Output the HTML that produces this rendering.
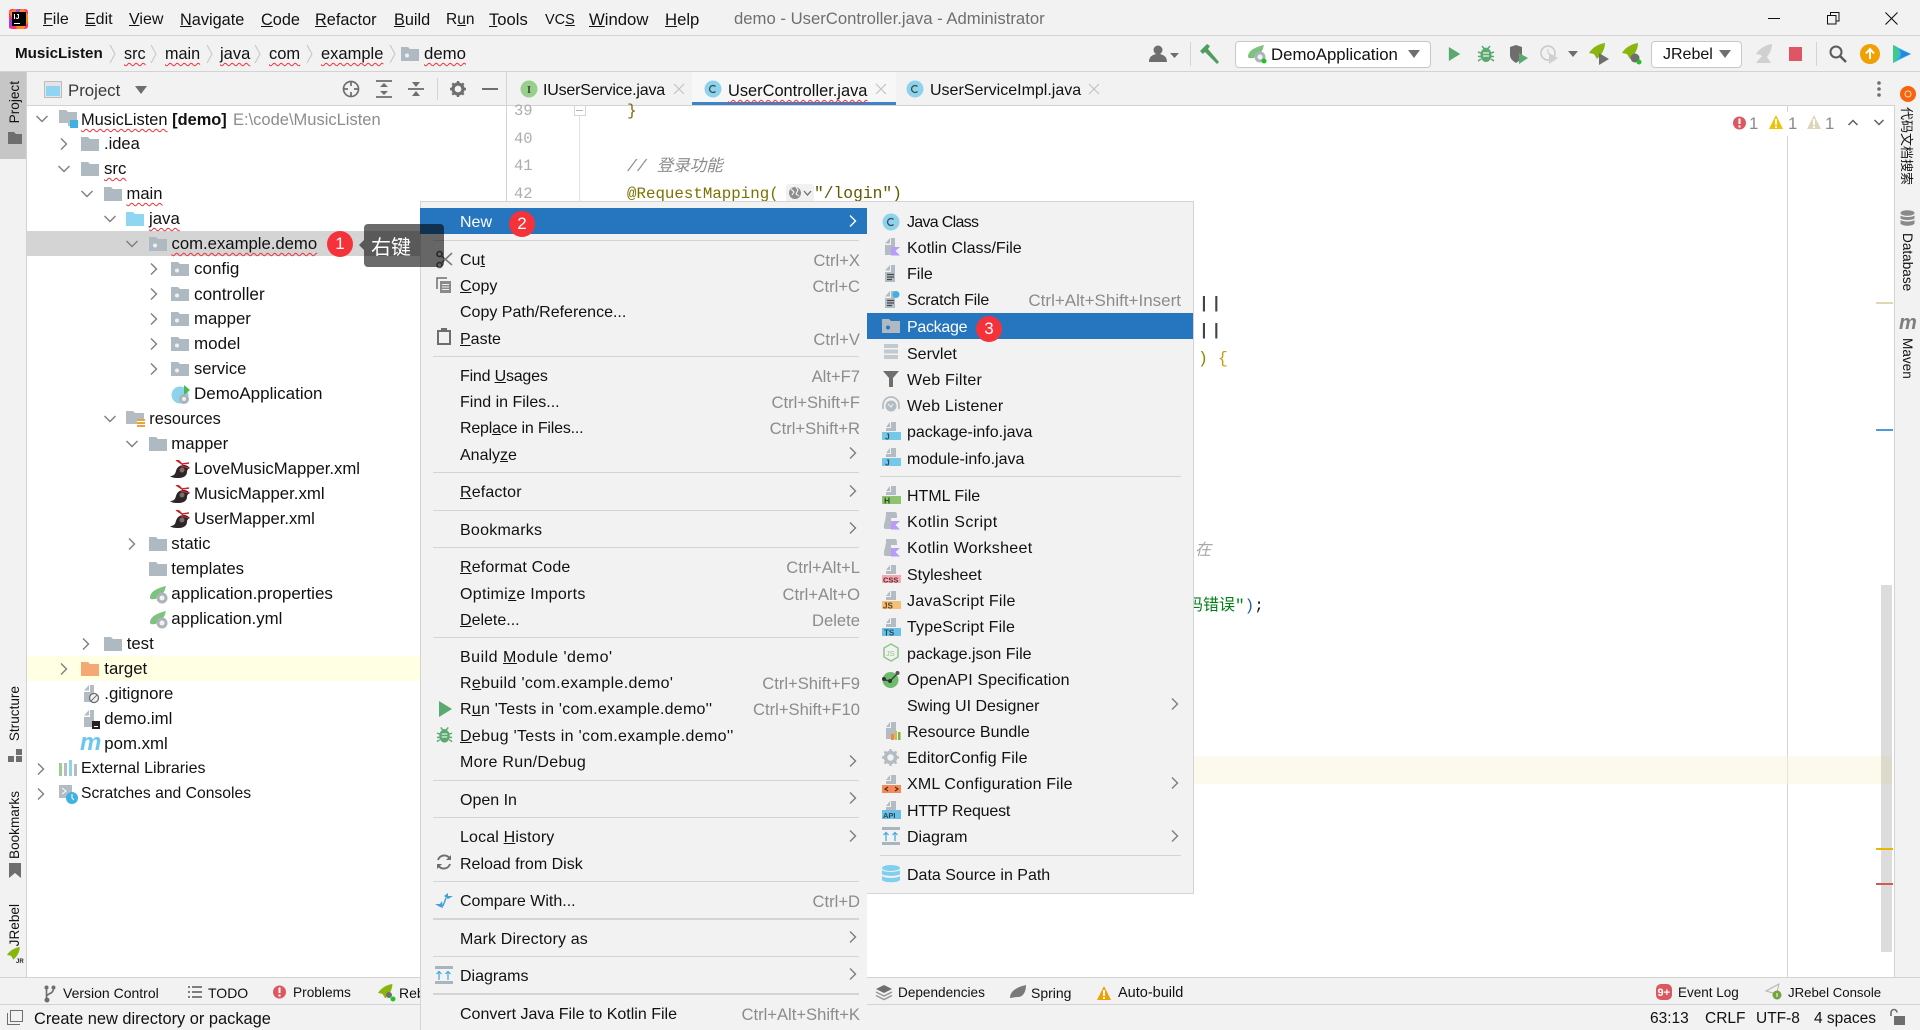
<!DOCTYPE html>
<html><head><meta charset="utf-8"><title>demo - UserController.java</title>
<style>
html,body{margin:0;padding:0}
body{width:1920px;height:1030px;overflow:hidden;position:relative;background:#f2f2f2;font-family:"Liberation Sans","Noto Sans CJK SC",sans-serif;color:#111}
.b{position:absolute}
svg{position:absolute;overflow:visible}
.t,.m,.s,.n,.x,.c,.tb{position:absolute;white-space:nowrap;line-height:20px;height:20px;font-style:normal}
.t{font-size:16.8px}
.m{font-size:16px;left:40px;margin-top:1px}
.s{font-size:16.6px;color:#8c8c8c;margin-top:1px}
.n{font-size:16.3px;top:10px}
.tb{font-size:14px;top:983px}
.sq{text-decoration:underline wavy #f0303a;text-decoration-thickness:1px;text-underline-offset:3px;text-decoration-skip-ink:none}
.c{font-family:"Liberation Mono","Noto Sans CJK SC",monospace;font-size:16px;margin-top:1px}
.v{position:absolute;writing-mode:vertical-rl;text-orientation:sideways;line-height:20px;width:20px;white-space:nowrap;font-size:13.6px}
.l{transform:rotate(180deg)}
.sp{position:absolute;height:1px;background:#d4d4d4}
.bd{position:absolute;width:26px;height:26px;border-radius:50%;background:#f5323a;color:#fff;text-align:center;line-height:26px;font-size:17px}
</style></head><body>
<svg width="0" height="0" style="position:absolute">
<defs>
<symbol id="fld" viewBox="0 0 18 16"><path d="M0 1h7l2 2h9v12H0z" fill="#afb9c1"/></symbol>
<symbol id="pkg" viewBox="0 0 18 16"><path d="M0 1h7l2 2h9v12H0z" fill="#afb9c1"/><circle cx="6" cy="9.500" r="2" fill="#eef1f2"/></symbol>
<symbol id="cr" viewBox="0 0 16 16"><path d="M5 2.500l5.500 5.500L5 13.500" fill="none" stroke="#7d7d7d" stroke-width="1.400"/></symbol>
<symbol id="cd" viewBox="0 0 16 16"><path d="M2.500 5L8 10.500 13.500 5" fill="none" stroke="#7d7d7d" stroke-width="1.400"/></symbol>
<symbol id="doc" viewBox="0 0 18 18"><path d="M8 0v5.500H3zM9 0h4v17H3V7h6z" fill="#b3bcc3"/></symbol>
<symbol id="cls" viewBox="0 0 18 18"><circle cx="9" cy="9" r="8.500" fill="#8ed3ec"/><path d="M11.500 6.500a3.500 3.500 0 1 0 0 5" fill="none" stroke="#3d4b52" stroke-width="1.300"/></symbol>
<symbol id="bird" viewBox="0 0 20 18"><path d="M0 16c3 0 5-1 6-5 1-4 4-6 8-6 3 0 5 2 6 3-2 1-3 2-3 4 0 4-4 6-8 6-4 0-7 0-9-2z" fill="#2e2626"/><path d="M6 0l6 4 7-1M8 0l5 5M11 6l8 2" fill="none" stroke="#c9242c" stroke-width="1.400"/><circle cx="12" cy="10" r="2.500" fill="#7b6b6b"/></symbol>
<symbol id="leaf" viewBox="0 0 20 20"><path d="M1 13C1 6 9 3 17 1c-1 3-1 5-3 7-3 0-6 2-7 6-3 0-5 1-6-1z" fill="#7fc17f"/><circle cx="13" cy="13" r="5.500" fill="#aab4bb"/><circle cx="13" cy="13" r="2.500" fill="#f2f2f2"/></symbol>
<symbol id="kt" viewBox="0 0 18 18"><path d="M8 0v5.500H3zM9 0h4v17H3V7h6z" fill="#b3bcc3"/><path d="M9 9h9l-4.500 4 4.500 4.500H9z" fill="#b99bf8"/></symbol>
<symbol id="ks" viewBox="0 0 18 18"><path d="M4 0h9c2 0 2 2 2 6H9v11H4c-3 0-2-3-2-3 0-4 2-5 2-14z" fill="#b3bcc3"/><path d="M9 9h9l-4.500 4 4.500 4.500H9z" fill="#b99bf8"/></symbol>
<symbol id="lines" viewBox="0 0 18 18"><path d="M5 9.500h7M5 12h7M5 14.500h5" stroke="#45494a" stroke-width="1.200"/></symbol>
<symbol id="dia" viewBox="0 0 18 18"><path d="M0 0h18v3H0zM0 15h18v3H0z" fill="#a9b4bb"/><path d="M4 14V6M1.500 8L4 5.500 6.500 8M13 14V6M10.500 8L13 5.500 15.500 8" fill="none" stroke="#3fa9dc" stroke-width="1.200"/></symbol>
<symbol id="run" viewBox="0 0 16 18"><path d="M1 1l13 8-13 8z" fill="#5aa96f"/></symbol>
<symbol id="bug" viewBox="0 0 18 18"><path d="M5 1l2 2.500h4L13 1M1 7l3 1M17 7l-3 1M1 11.500h3M17 11.500h-3M1 16l3-2M17 16l-3-2" stroke="#5aa96f" stroke-width="1.500" fill="none"/><ellipse cx="9" cy="10" rx="5.500" ry="7" fill="#5aa96f"/><path d="M6 8h6M6 11h6" stroke="#f2f2f2" stroke-width="1.200"/></symbol>
<symbol id="rk" viewBox="0 0 20 20"><path d="M16 0C9 1 3 5 0 10l5 1 3 5c4-4 8-9 8-16z" fill="#8ab40e"/></symbol>
</defs>
</svg>

<!-- title bar -->
<div class="b" style="left:0;top:35px;width:1920px;height:1px;background:#d3d3d3"></div>
<svg style="left:8px;top:8px" width="22" height="22"><rect x="1" y="1" width="19" height="20" rx="3" fill="#ff2d7c"/><path d="M1 4l6-3h9l4 6v7l-4 7H9z" fill="#ffa400" opacity=".75"/><path d="M1 14l8-13 4 0-12 20z" fill="#7b4bff" opacity=".8"/><rect x="4" y="4" width="14" height="14" fill="#000"/><text x="5.500" y="11" font-size="7" font-weight="bold" fill="#fff">IJ</text><rect x="6" y="15" width="6" height="1" fill="#fff"/></svg>
<i class="n" style="left:43px;font-size:16px"><u>F</u>ile</i>
<i class="n" style="left:85px;font-size:16px"><u>E</u>dit</i>
<i class="n" style="left:129px;font-size:16px"><u>V</u>iew</i>
<i class="n" style="left:180px"><u>N</u>avigate</i>
<i class="n" style="left:261px"><u>C</u>ode</i>
<i class="n" style="left:315px"><u>R</u>efactor</i>
<i class="n" style="left:394px"><u>B</u>uild</i>
<i class="n" style="left:446px;font-size:15.5px">R<u>u</u>n</i>
<i class="n" style="left:489px;font-size:16.600px"><u>T</u>ools</i>
<i class="n" style="left:545px;font-size:14.500px">VC<u>S</u></i>
<i class="n" style="left:589px;font-size:16.700px"><u>W</u>indow</i>
<i class="n" style="left:665px;font-size:16.700px"><u>H</u>elp</i>
<i class="n" style="left:734px;top:9px;color:#6f6f6f;font-size:16.700px">demo - UserController.java - Administrator</i>
<div class="b" style="left:1768px;top:18px;width:12px;height:1px;background:#111"></div>
<svg style="left:1827px;top:12px" width="13" height="13"><path d="M.5 3.500h8.500v8.500H.500zM3.500 3V.5H12v8.500H9.500" fill="none" stroke="#111"/></svg>
<svg style="left:1885px;top:12px" width="13" height="13"><path d="M.5.5l12 12M12.500.5l-12 12" stroke="#111" stroke-width="1.100"/></svg>

<!-- breadcrumb -->
<div class="b" style="left:0;top:71px;width:1920px;height:1px;background:#d3d3d3"></div>
<i class="n" style="left:15px;top:44px;font-weight:bold;font-size:15.200px">MusicListen</i>
<i class="n sq" style="left:124px;top:44px;font-size:16.200px">src</i>
<i class="n sq" style="left:165px;top:44px;font-size:16.200px">main</i>
<i class="n sq" style="left:220px;top:44px;font-size:16.500px">java</i>
<i class="n sq" style="left:269px;top:44px;font-size:16.500px">com</i>
<i class="n sq" style="left:321px;top:44px;font-size:16.500px">example</i>
<i class="n sq" style="left:424px;top:44px;font-size:16.800px">demo</i>
<svg style="left:109px;top:44px" width="8" height="20"><path d="M1 1l5 9-5 9" fill="none" stroke="#c4c4c4"/></svg>
<svg style="left:150px;top:44px" width="8" height="20"><path d="M1 1l5 9-5 9" fill="none" stroke="#c4c4c4"/></svg>
<svg style="left:206px;top:44px" width="8" height="20"><path d="M1 1l5 9-5 9" fill="none" stroke="#c4c4c4"/></svg>
<svg style="left:254px;top:44px" width="8" height="20"><path d="M1 1l5 9-5 9" fill="none" stroke="#c4c4c4"/></svg>
<svg style="left:306px;top:44px" width="8" height="20"><path d="M1 1l5 9-5 9" fill="none" stroke="#c4c4c4"/></svg>
<svg style="left:389px;top:44px" width="8" height="20"><path d="M1 1l5 9-5 9" fill="none" stroke="#c4c4c4"/></svg>
<svg style="left:401px;top:46px" width="18" height="16"><use href="#pkg"/></svg>

<!-- main toolbar right -->
<svg style="left:1149px;top:45px" width="32" height="18"><circle cx="9" cy="5" r="4.500" fill="#6e6e6e"/><path d="M0 17c0-6 4-7 7-8h4c3 1 7 2 7 8z" fill="#6e6e6e"/><path d="M21 8h9l-4.500 5z" fill="#6e6e6e"/></svg>
<div class="b" style="left:1190px;top:42px;width:1px;height:24px;background:#d3d3d3"></div>
<svg style="left:1200px;top:44px" width="20" height="20"><path d="M0 7l7-7 3 2-2 3L19 18l-2 2L5 8 3 10z" fill="#4f9e5f"/></svg>
<div class="b" style="left:1235px;top:41px;width:194px;height:25px;background:#fff;border:1px solid #c8c8c8;border-radius:4px"></div>
<svg style="left:1247px;top:44px" width="20" height="20"><use href="#leaf"/><circle cx="17" cy="17" r="2.500" fill="#1fc41f"/></svg>
<i class="n" style="left:1271px;top:45px;font-size:16.800px">DemoApplication</i>
<svg style="left:1408px;top:50px" width="12" height="8"><path d="M0 0h12L6 8z" fill="#6e6e6e"/></svg>
<svg style="left:1448px;top:45px" width="14" height="18"><use href="#run"/></svg>
<svg style="left:1477px;top:45px" width="18" height="18"><use href="#bug"/></svg>
<svg style="left:1509px;top:45px" width="20" height="20"><path d="M1 2l6-2 6 2v8c0 4-3 6-6 8-3-2-6-4-6-8z" fill="#6e6e6e"/><path d="M10 8l9 5-9 6z" fill="#5aa96f"/></svg>
<svg style="left:1540px;top:45px" width="20" height="20"><circle cx="8" cy="8" r="7" fill="none" stroke="#c8c8c8" stroke-width="1.500"/><path d="M8 4v4l3 2" stroke="#c8c8c8" fill="none"/><path d="M9 8l9 5-9 6z" fill="#d0d0d0"/></svg>
<svg style="left:1568px;top:51px" width="10" height="6"><path d="M0 0h10L5 6z" fill="#6e6e6e"/></svg>
<svg style="left:1589px;top:43px" width="20" height="22"><path d="M16 0C9 1 3 5 0 10l5 1 3 5c4-4 8-9 8-16z" fill="#8ab40e"/><path d="M10 10l10 6-10 6z" fill="#6e6e6e"/></svg>
<svg style="left:1622px;top:43px" width="20" height="22"><path d="M16 0C9 1 3 5 0 10l5 1 3 5c4-4 8-9 8-16z" fill="#8ab40e"/><circle cx="13" cy="15" r="4.500" fill="#6e6e6e"/><circle cx="17" cy="19" r="2.500" fill="#1fc41f"/></svg>
<div class="b" style="left:1651px;top:41px;width:89px;height:25px;background:#fff;border:1px solid #c8c8c8;border-radius:4px"></div>
<i class="n" style="left:1663px;top:45px;font-size:16px">JRebel</i>
<svg style="left:1719px;top:50px" width="12" height="8"><path d="M0 0h12L6 8z" fill="#6e6e6e"/></svg>
<svg style="left:1754px;top:44px" width="20" height="20"><path d="M18 0C11 1 5 5 2 10l5 1 3 5c4-4 8-9 8-16z" fill="#d0d0d0"/><path d="M2 19l5-6h6l4 6z" fill="#d0d0d0"/></svg>
<div class="b" style="left:1789px;top:47px;width:13px;height:14px;background:#e05564"></div>
<div class="b" style="left:1816px;top:42px;width:1px;height:24px;background:#d3d3d3"></div>
<svg style="left:1829px;top:45px" width="18" height="18"><circle cx="7" cy="7" r="5.500" fill="none" stroke="#5a5a5a" stroke-width="2"/><path d="M11 11l6 6" stroke="#5a5a5a" stroke-width="2.400"/></svg>
<svg style="left:1860px;top:44px" width="20" height="20"><circle cx="10" cy="10" r="10" fill="#f0a000"/><path d="M10 15V6M6 9.500L10 5l4 4.500" fill="none" stroke="#fff" stroke-width="2"/></svg>
<svg style="left:1893px;top:45px" width="18" height="18"><path d="M0 0l18 9-18 9z" fill="#2fb5e8"/><path d="M0 0c8 2 8 12 0 18z" fill="#3fc98a"/><path d="M5 4c4 2 4 8 0 10l13-5z" fill="#2a6fd8" opacity=".7"/></svg>

<!-- left stripe -->
<div class="b" style="left:26px;top:72px;width:1px;height:905px;background:#d3d3d3"></div>
<div class="b" style="left:0;top:72px;width:26px;height:87px;background:#c6c6c6"></div>
<div class="v l" style="left:5px;top:81px">Project</div>
<svg style="left:8px;top:131px" width="14" height="14"><path d="M0 1h6l2 2h6v10H0z" fill="#6e6e6e"/></svg>
<div class="v l" style="left:5px;top:686px">Structure</div>
<svg style="left:8px;top:749px" width="14" height="13"><path d="M0 7h6v6H0zM8 7h6v6H8zM8 0h6v6H8z" fill="#6e6e6e"/></svg>
<div class="v l" style="left:5px;top:791px">Bookmarks</div>
<svg style="left:9px;top:863px" width="12" height="15"><path d="M0 0h12v15L6 10l-6 5z" fill="#6e6e6e"/></svg>
<div class="v l" style="left:5px;top:904px">JRebel</div>
<svg style="left:7px;top:947px" width="16" height="16"><use href="#rk"/><text x="9" y="16" font-size="6" font-weight="bold" fill="#222">JR</text></svg>

<!-- project header -->
<div class="b" style="left:27px;top:105px;width:1868px;height:1px;background:#d3d3d3"></div>
<svg style="left:44px;top:81px" width="18" height="17"><rect x=".5" y=".5" width="17" height="16" fill="#e4e4e4" stroke="#bdbdbd"/><rect x="2" y="5" width="14" height="10" fill="#8fd5f3"/></svg>
<i class="t" style="left:68px;top:81px;color:#3a3a3a">Project</i>
<svg style="left:135px;top:86px" width="12" height="8"><path d="M0 0h12L6 8z" fill="#6e6e6e"/></svg>
<svg style="left:342px;top:80px" width="18" height="18"><circle cx="9" cy="9" r="7.500" fill="none" stroke="#6e6e6e" stroke-width="1.700"/><path d="M9 1v5M9 12v5M1 9h5M12 9h5" stroke="#6e6e6e" stroke-width="1.700"/></svg>
<svg style="left:376px;top:80px" width="16" height="18"><path d="M0 1h16M0 17h16" stroke="#6e6e6e" stroke-width="1.800"/><path d="M8 3l4 4H4zM8 15l4-4H4z" fill="#6e6e6e"/></svg>
<svg style="left:408px;top:80px" width="16" height="18"><path d="M0 9h16" stroke="#6e6e6e" stroke-width="1.800"/><path d="M8 7l4-5H4zM8 11l4 5H4z" fill="#6e6e6e"/></svg>
<div class="b" style="left:437px;top:78px;width:1px;height:22px;background:#d3d3d3"></div>
<svg style="left:450px;top:81px" width="16" height="16"><circle cx="8" cy="8" r="5" fill="none" stroke="#6e6e6e" stroke-width="3.200"/><path d="M8 0v3M8 13v3M0 8h3M13 8h3M2.300 2.300l2 2M11.700 11.700l2 2M2.300 13.700l2-2M11.700 4.300l2-2" stroke="#6e6e6e" stroke-width="2.400"/></svg>
<div class="b" style="left:482px;top:88px;width:16px;height:2px;background:#6e6e6e"></div>

<!-- tabs -->
<div class="b" style="left:506px;top:72px;width:1px;height:33px;background:#d3d3d3"></div>
<div class="b" style="left:692px;top:72px;width:204px;height:30px;background:#f7f7f7"></div>
<div class="b" style="left:692px;top:102px;width:204px;height:3px;background:#4083c9"></div>
<svg style="left:520px;top:80px" width="18" height="18"><circle cx="9" cy="9" r="8.500" fill="#97cf8d"/><text x="9" y="13" text-anchor="middle" font-size="11" font-weight="bold" font-family="Liberation Serif" fill="#3d4b3a">I</text></svg>
<i class="t" style="left:543px;top:81px;font-size:16px;letter-spacing:-.2px">IUserService.java</i>
<svg style="left:674px;top:84px" width="10" height="10"><path d="M0 0l10 10M10 0L0 10" stroke="#c3c3c3" stroke-width="1.200"/></svg>
<svg style="left:704px;top:80px" width="18" height="18"><use href="#cls"/></svg>
<i class="t sq" style="left:728px;top:81px;font-size:16.400px">UserController.java</i>
<svg style="left:876px;top:84px" width="10" height="10"><path d="M0 0l10 10M10 0L0 10" stroke="#c3c3c3" stroke-width="1.200"/></svg>
<svg style="left:906px;top:80px" width="18" height="18"><use href="#cls"/></svg>
<i class="t" style="left:930px;top:81px;font-size:16px">UserServiceImpl.java</i>
<svg style="left:1089px;top:84px" width="10" height="10"><path d="M0 0l10 10M10 0L0 10" stroke="#c3c3c3" stroke-width="1.200"/></svg>
<svg style="left:1876px;top:81px" width="6" height="16"><circle cx="3" cy="2" r="1.800" fill="#6e6e6e"/><circle cx="3" cy="8" r="1.800" fill="#6e6e6e"/><circle cx="3" cy="14" r="1.800" fill="#6e6e6e"/></svg>

<!-- editor -->
<div class="b" style="left:27px;top:106px;width:1867px;height:871px;background:#fff"></div>
<div class="b" style="left:506px;top:106px;width:1px;height:871px;background:#d3d3d3"></div>
<div class="b" style="left:579px;top:106px;width:1px;height:871px;background:#e2e2e2"></div>
<div class="b" style="left:1787px;top:136px;width:1px;height:841px;background:#d6d6d6"></div>
<div class="b" style="left:1787px;top:106px;width:1px;height:6px;background:#d6d6d6"></div>
<div class="b" style="left:1894px;top:106px;width:1px;height:871px;background:#d3d3d3"></div>
<i class="c" style="left:514px;top:100px;color:#adadad;font-size:15.500px">39</i>
<i class="c" style="left:514px;top:128px;color:#adadad;font-size:15.500px">40</i>
<i class="c" style="left:514px;top:155px;color:#adadad;font-size:15.500px">41</i>
<i class="c" style="left:514px;top:183px;color:#adadad;font-size:15.500px">42</i>
<div class="b" style="left:574px;top:106px;width:10px;height:9px;background:#fff;border:1px solid #d6d6d6;border-top:none"></div>
<div class="b" style="left:576px;top:110px;width:7px;height:1px;background:#b5b5b5"></div>
<i class="c" style="left:627px;top:100px;color:#7a6a10">}</i>
<i class="c" style="left:627px;top:156px;color:#8c8c8c;font-style:italic;font-size:16.500px">//&nbsp;登录功能</i>
<i class="c" style="left:627px;top:183px;color:#7a7200;font-size:15.800px">@RequestMapping(</i>
<div class="b" style="left:786px;top:184px;width:28px;height:18px;background:#f1f1f1;border-radius:3px"></div>
<svg style="left:788px;top:186px" width="24" height="14"><circle cx="7" cy="7" r="6" fill="#8e8e8e"/><path d="M3 3l3 3-2 3M8 1l2 3-2 4 3 2" fill="none" stroke="#fff"/><path d="M16 5l3.500 4L23 5" fill="none" stroke="#6e6e6e" stroke-width="1.300"/></svg>
<i class="c" style="left:814px;top:183px;color:#5f5a00;font-size:16.300px">"/login")</i>
<i class="c" style="left:1199px;top:293px;color:#444;letter-spacing:2.500px;font-weight:bold;font-size:16.500px">||</i>
<i class="c" style="left:1199px;top:320px;color:#444;letter-spacing:2.500px;font-weight:bold;font-size:16.500px">||</i>
<i class="c" style="left:1198px;top:348px;color:#8a8a00;font-size:16.500px">)&nbsp;<span style="color:#c89a10">{</span></i>
<i class="c" style="left:1195px;top:540px;color:#a8a8a8;font-style:italic">在</i>
<i class="c" style="left:1187px;top:595px;color:#067d17">码错误"<span style="color:#2a5aa8">)</span><span style="color:#111">;</span></i>
<div class="b" style="left:1193px;top:756px;width:699px;height:28px;background:#fcfaed"></div>
<div class="b" style="left:1787px;top:756px;width:1px;height:28px;background:#e6e4d6"></div>
<div class="b" style="left:1881px;top:585px;width:11px;height:367px;background:#dcdcdc"></div>
<div class="b" style="left:1881px;top:756px;width:11px;height:28px;background:#dcdacb"></div>
<div class="b" style="left:1876px;top:302px;width:17px;height:2px;background:#dfd6b8"></div>
<div class="b" style="left:1876px;top:429px;width:17px;height:2px;background:#4a9bd8"></div>
<div class="b" style="left:1876px;top:848px;width:17px;height:2px;background:#e6b800"></div>
<div class="b" style="left:1876px;top:883px;width:17px;height:2px;background:#cf5b56"></div>
<!-- inspection -->
<svg style="left:1733px;top:116px" width="13" height="14"><circle cx="6.500" cy="7" r="6.500" fill="#db5860"/><path d="M6.500 2.500v5.500M6.500 9.500v2" stroke="#fff" stroke-width="2"/></svg>
<i class="t" style="left:1749px;top:114px;color:#8a8a8a">1</i>
<svg style="left:1769px;top:115px" width="14" height="14"><path d="M7 0l7 14H0z" fill="#f2c200"/><path d="M7 4v6M7 11v2" stroke="#fff" stroke-width="2"/></svg>
<i class="t" style="left:1788px;top:114px;color:#8a8a8a">1</i>
<svg style="left:1807px;top:115px" width="14" height="14"><path d="M7 0l7 14H0z" fill="#dfd6b8"/><path d="M7 4v6M7 11v2" stroke="#fff" stroke-width="2"/></svg>
<i class="t" style="left:1825px;top:114px;color:#8a8a8a">1</i>
<svg style="left:1848px;top:119px" width="10" height="7"><path d="M.5 6L5 1.500 9.500 6" fill="none" stroke="#5f5f5f" stroke-width="1.500"/></svg>
<svg style="left:1874px;top:119px" width="10" height="7"><path d="M.5 1L5 5.500 9.500 1" fill="none" stroke="#5f5f5f" stroke-width="1.500"/></svg>

<!-- right stripe -->
<svg style="left:1900px;top:86px" width="16" height="16"><circle cx="8" cy="8" r="8" fill="#f5640f"/><circle cx="8" cy="8" r="3" fill="none" stroke="#ffd9b8"/></svg>
<div class="v" style="left:1897px;top:107px;font-size:13px;font-family:'Noto Sans CJK SC',sans-serif">代码文档搜索</div>
<svg style="left:1900px;top:210px" width="15" height="17"><ellipse cx="7.500" cy="3" rx="7" ry="2.800" fill="#8a8a8a"/><path d="M.5 5.500c2 2 12 2 14 0v3c-2 2-12 2-14 0zM.5 10c2 2 12 2 14 0v3.500c-2 3-12 3-14 0z" fill="#8a8a8a"/></svg>
<div class="v" style="left:1897px;top:233px">Database</div>
<i class="b" style="left:1899px;top:312px;font:bold italic 20px 'Liberation Sans';color:#7f7f7f">m</i>
<div class="v" style="left:1897px;top:338px">Maven</div>

<!-- tree -->
<div class="b" style="left:27px;top:231px;width:479px;height:25px;background:#d4d4d4"></div>
<div class="b" style="left:27px;top:656px;width:479px;height:25px;background:#ffffe4"></div>
<svg style="left:34px;top:111px" width="16" height="16"><use href="#cd"/></svg>
<svg style="left:59px;top:110px" width="19" height="18"><path d="M0 0h7l2 2h9v14H9v-3H0z" fill="#b3bcc3"/><rect x="11" y="10" width="8" height="8" fill="#3fb1e3"/></svg>
<i class="t" style="left:81px;top:110px;font-size:16.400px"><span class="sq">MusicListen</span> <b>[demo]</b></i>
<i class="t" style="left:233px;top:110px;color:#8c8c8c;font-size:16.500px">E:\code\MusicListen</i>
<svg style="left:56px;top:136px" width="16" height="16"><use href="#cr"/></svg>
<svg style="left:81px;top:136px" width="18" height="16"><use href="#fld"/></svg>
<i class="t" style="left:104px;top:134px;font-size:16.500px">.idea</i>
<svg style="left:56px;top:161px" width="16" height="16"><use href="#cd"/></svg>
<svg style="left:81px;top:161px" width="18" height="16"><use href="#fld"/></svg>
<i class="t sq" style="left:104px;top:159px">src</i>
<svg style="left:79px;top:186px" width="16" height="16"><use href="#cd"/></svg>
<svg style="left:104px;top:186px" width="18" height="16"><use href="#fld"/></svg>
<i class="t sq" style="left:126.500px;top:184px;font-size:16.600px">main</i>
<svg style="left:102px;top:211px" width="16" height="16"><use href="#cd"/></svg>
<svg style="left:126px;top:211px" width="18" height="16"><path d="M0 1h7l2 2h9v12H0z" fill="#90d5f2"/></svg>
<i class="t sq" style="left:149px;top:209px">java</i>
<svg style="left:124px;top:236px" width="16" height="16"><use href="#cd"/></svg>
<svg style="left:149px;top:236px" width="18" height="16"><use href="#pkg"/></svg>
<i class="t sq" style="left:171.500px;top:234px;font-size:16.700px">com.example.demo</i>
<svg style="left:146px;top:261px" width="16" height="16"><use href="#cr"/></svg>
<svg style="left:171px;top:261px" width="18" height="16"><use href="#pkg"/></svg>
<i class="t" style="left:194px;top:259px;font-size:17px">config</i>
<svg style="left:146px;top:286px" width="16" height="16"><use href="#cr"/></svg>
<svg style="left:171px;top:286px" width="18" height="16"><use href="#pkg"/></svg>
<i class="t" style="left:194px;top:284px;font-size:17.200px">controller</i>
<svg style="left:146px;top:311px" width="16" height="16"><use href="#cr"/></svg>
<svg style="left:171px;top:311px" width="18" height="16"><use href="#pkg"/></svg>
<i class="t" style="left:194px;top:309px">mapper</i>
<svg style="left:146px;top:336px" width="16" height="16"><use href="#cr"/></svg>
<svg style="left:171px;top:336px" width="18" height="16"><use href="#pkg"/></svg>
<i class="t" style="left:194px;top:334px;font-size:17px">model</i>
<svg style="left:146px;top:361px" width="16" height="16"><use href="#cr"/></svg>
<svg style="left:171px;top:361px" width="18" height="16"><use href="#pkg"/></svg>
<i class="t" style="left:194px;top:359px;font-size:16.500px">service</i>
<svg style="left:171px;top:385px" width="19" height="19"><circle cx="9" cy="10" r="8.500" fill="#8ed3ec"/><path d="M19 5l-6-5v10z" fill="#4cb84c"/><circle cx="13" cy="14" r="5" fill="#aab4bb"/><circle cx="13" cy="14" r="2" fill="#eee"/></svg>
<i class="t" style="left:194px;top:384px;font-size:17px">DemoApplication</i>
<svg style="left:102px;top:411px" width="16" height="16"><use href="#cd"/></svg>
<svg style="left:126px;top:410px" width="19" height="18"><path d="M0 1h7l2 2h9v6H11v5H0z" fill="#b3bcc3"/><path d="M11 10h8M11 13h8M11 16h8" stroke="#e8a33d" stroke-width="2"/></svg>
<i class="t" style="left:149.300px;top:409px;font-size:16.300px">resources</i>
<svg style="left:124px;top:436px" width="16" height="16"><use href="#cd"/></svg>
<svg style="left:149px;top:436px" width="18" height="16"><use href="#fld"/></svg>
<i class="t" style="left:171.300px;top:434px">mapper</i>
<svg style="left:170px;top:460px" width="20" height="18"><use href="#bird"/></svg>
<i class="t" style="left:194px;top:459px;font-size:16.700px">LoveMusicMapper.xml</i>
<svg style="left:170px;top:485px" width="20" height="18"><use href="#bird"/></svg>
<i class="t" style="left:194px;top:484px">MusicMapper.xml</i>
<svg style="left:170px;top:510px" width="20" height="18"><use href="#bird"/></svg>
<i class="t" style="left:194px;top:509px;font-size:16.600px">UserMapper.xml</i>
<svg style="left:124px;top:536px" width="16" height="16"><use href="#cr"/></svg>
<svg style="left:149px;top:536px" width="18" height="16"><use href="#fld"/></svg>
<i class="t" style="left:171.300px;top:534px">static</i>
<svg style="left:149px;top:561px" width="18" height="16"><use href="#fld"/></svg>
<i class="t" style="left:171.300px;top:559px">templates</i>
<svg style="left:149px;top:585px" width="20" height="20"><use href="#leaf"/></svg>
<i class="t" style="left:171.300px;top:584px;font-size:17px">application.properties</i>
<svg style="left:149px;top:610px" width="20" height="20"><use href="#leaf"/></svg>
<i class="t" style="left:171.300px;top:609px">application.yml</i>
<svg style="left:78px;top:636px" width="16" height="16"><use href="#cr"/></svg>
<svg style="left:104px;top:636px" width="18" height="16"><use href="#fld"/></svg>
<i class="t" style="left:126.700px;top:634px">test</i>
<svg style="left:56px;top:661px" width="16" height="16"><use href="#cr"/></svg>
<svg style="left:81px;top:661px" width="18" height="16"><path d="M0 1h7l2 2h9v12H0z" fill="#f5a873"/></svg>
<i class="t" style="left:104.300px;top:659px">target</i>
<svg style="left:81px;top:685px" width="18" height="18"><use href="#doc"/><circle cx="13" cy="13" r="4.500" fill="#f2f2f2" stroke="#6e6e6e" stroke-width="1.300"/><path d="M10 16l6-6" stroke="#6e6e6e"/></svg>
<i class="t" style="left:104.300px;top:684px">.gitignore</i>
<svg style="left:81px;top:710px" width="18" height="18"><use href="#doc"/><rect x="11" y="11" width="8" height="8" fill="#222"/><rect x="13" y="16" width="4" height="1" fill="#fff"/></svg>
<i class="t" style="left:104.300px;top:709px">demo.iml</i>
<i class="b" style="left:80px;top:731px;font:bold italic 24px/24px 'Liberation Sans';color:#6cc6ee;letter-spacing:-1px">m</i>
<i class="t" style="left:104.300px;top:734px">pom.xml</i>
<svg style="left:33px;top:761px" width="16" height="16"><use href="#cr"/></svg>
<svg style="left:59px;top:760px" width="18" height="16"><path d="M0 3h3v13H0z" fill="#97cf8d"/><path d="M5 3h3v13H5z" fill="#b3bcc3"/><path d="M10 0h3v16h-3z" fill="#8ed3ec"/><path d="M15 4h3v12h-3z" fill="#b3bcc3"/></svg>
<i class="t" style="left:81px;top:759px;font-size:16px">External Libraries</i>
<svg style="left:33px;top:786px" width="16" height="16"><use href="#cr"/></svg>
<svg style="left:59px;top:785px" width="19" height="19"><rect width="13" height="13" fill="#b3bcc3"/><path d="M3 3l4 3-4 3" stroke="#fff" fill="none"/><circle cx="13" cy="13" r="6" fill="#3fb1e3"/><path d="M13 9v4l2 2" stroke="#fff" fill="none"/></svg>
<i class="t" style="left:81px;top:784px;font-size:15.700px">Scratches and Consoles</i>
<!-- badge 1 -->
<div class="bd" style="left:327px;top:231px">1</div>

<!-- bottom bars -->
<div class="b" style="left:0;top:977px;width:1920px;height:1px;background:#d3d3d3"></div>
<div class="b" style="left:0;top:1004px;width:1920px;height:1px;background:#d3d3d3"></div>
<svg style="left:44px;top:985px" width="12" height="18"><circle cx="2.500" cy="2.500" r="2" fill="#6e6e6e"/><circle cx="9.500" cy="2.500" r="2" fill="#6e6e6e"/><circle cx="3" cy="15" r="2.500" fill="#6e6e6e"/><path d="M2.500 3v11M9.500 3c0 6-5 5-7 8" stroke="#6e6e6e" stroke-width="1.600" fill="none"/></svg>
<i class="tb" style="left:63px">Version Control</i>
<svg style="left:188px;top:986px" width="14" height="13"><path d="M0 1h2M0 6h2M0 11h2M4 1h10M4 6h10M4 11h10" stroke="#6e6e6e" stroke-width="1.800"/></svg>
<i class="tb" style="left:208px">TODO</i>
<svg style="left:273px;top:985px" width="13" height="14"><circle cx="6.500" cy="7" r="6.500" fill="#db5860"/><path d="M6.500 2.500v5.500M6.500 9.500v2" stroke="#fff" stroke-width="2"/></svg>
<i class="tb" style="left:293px;font-size:13.700px">Problems</i>
<svg style="left:378px;top:984px" width="18" height="18"><use href="#rk"/><circle cx="11" cy="11" r="3" fill="#6e6e6e"/><circle cx="15" cy="15" r="2.500" fill="#1fc41f"/></svg>
<i class="tb" style="left:399px">Reb</i>
<svg style="left:876px;top:985px" width="16" height="17"><path d="M8 0l8 4-8 4-8-4z" fill="#6e6e6e"/><path d="M0 7l8 4 8-4M0 10.500l8 4 8-4" fill="none" stroke="#9a9a9a" stroke-width="1.500"/></svg>
<i class="tb" style="left:898px;font-size:13.600px">Dependencies</i>
<svg style="left:1010px;top:985px" width="16" height="14"><path d="M0 13C0 6 7 2 16 0c0 7-3 12-8 12-3 0-6 1-8 1z" fill="#7a7a7a"/></svg>
<i class="tb" style="left:1031px">Spring</i>
<svg style="left:1097px;top:986px" width="14" height="14"><path d="M7 0l7 14H0z" fill="#f0a000"/><path d="M7 4v6M7 11v2" stroke="#fff" stroke-width="2"/></svg>
<i class="tb" style="left:1118px;font-size:14.500px">Auto-build</i>
<svg style="left:1656px;top:984px" width="16" height="16"><rect width="16" height="16" rx="5" fill="#db5860"/><text x="1.500" y="12" font-size="11" font-weight="bold" fill="#fff">9+</text></svg>
<i class="tb" style="left:1678px;font-size:13.500px">Event Log</i>
<svg style="left:1766px;top:984px" width="16" height="16"><path d="M0 7L13 0l-3 12-3-3z" fill="none" stroke="#b5b5b5"/><circle cx="11" cy="11" r="4.500" fill="#73a53b"/><path d="M11 9v4" stroke="#fff"/></svg>
<i class="tb" style="left:1788px;font-size:13.200px">JRebel Console</i>
<svg style="left:7px;top:1010px" width="16" height="15"><rect x="3.500" y=".5" width="12" height="11" fill="none" stroke="#6e6e6e"/><path d="M.5 3v11.500H13" fill="none" stroke="#6e6e6e"/></svg>
<i class="t" style="left:34px;top:1009px;font-size:16.400px">Create new directory or package</i>
<i class="t" style="left:1650px;top:1009px;font-size:15.500px">63:13</i>
<i class="t" style="left:1705px;top:1009px;font-size:15.500px">CRLF</i>
<i class="t" style="left:1756px;top:1009px;font-size:15.500px">UTF-8</i>
<i class="t" style="left:1814px;top:1009px;font-size:15.500px">4 spaces</i>
<svg style="left:1890px;top:1009px" width="15" height="16"><path d="M1 7V3.500a3 3 0 0 1 6 0" fill="none" stroke="#6e6e6e" stroke-width="1.600"/><rect x="4" y="7" width="11" height="9" fill="#6e6e6e"/></svg>

<!-- main context menu -->
<div class="b" style="left:420px;top:201px;width:447px;height:829px;background:#f2f2f2;border-left:1px solid #d4d4d4;border-top:1px solid #d4d4d4;box-sizing:border-box;overflow:hidden">
</div>
<div class="b" style="left:420px;top:208px;width:447px;height:26px;background:#2675bf"></div>
<div style="position:absolute;left:420px;top:0;width:447px;height:1030px">
<i class="m" style="top:212px;color:#fff">New</i>
<i class="m" style="top:250px">Cu<u>t</u></i>
<i class="m" style="top:276px"><u>C</u>opy</i>
<i class="m" style="top:302px">Copy Path/Reference...</i>
<i class="m" style="top:329px"><u>P</u>aste</i>
<i class="m" style="top:366px;letter-spacing:-.2px">Find <u>U</u>sages</i>
<i class="m" style="top:392px">Find in Files...</i>
<i class="m" style="top:418px;letter-spacing:-.2px">Repl<u>a</u>ce in Files...</i>
<i class="m" style="top:445px">Analy<u>z</u>e</i>
<i class="m" style="top:482px;letter-spacing:.15px"><u>R</u>efactor</i>
<i class="m" style="top:520px;letter-spacing:.25px">Bookmarks</i>
<i class="m" style="top:557px;letter-spacing:.15px"><u>R</u>eformat Code</i>
<i class="m" style="top:584px;letter-spacing:.3px">Optimi<u>z</u>e Imports</i>
<i class="m" style="top:610px"><u>D</u>elete...</i>
<i class="m" style="top:647px;letter-spacing:.5px">Build <u>M</u>odule 'demo'</i>
<i class="m" style="top:673px;letter-spacing:.34px">R<u>e</u>build 'com.example.demo'</i>
<i class="m" style="top:699px;letter-spacing:.24px">R<u>u</u>n 'Tests in 'com.example.demo''</i>
<i class="m" style="top:726px;letter-spacing:.33px"><u>D</u>ebug 'Tests in 'com.example.demo''</i>
<i class="m" style="top:752px;letter-spacing:.3px">More Run/Debug</i>
<i class="m" style="top:790px">Open In</i>
<i class="m" style="top:827px;letter-spacing:.15px">Local <u>H</u>istory</i>
<i class="m" style="top:854px">Reload from Disk</i>
<i class="m" style="top:891px">Compare With...</i>
<i class="m" style="top:929px;letter-spacing:.15px">Mark Directory as</i>
<i class="m" style="top:966px">Diagrams</i>
<i class="m" style="top:1004px">Convert Java File to Kotlin File</i>
<i class="s" style="right:7px;top:250px">Ctrl+X</i>
<i class="s" style="right:7px;top:276px">Ctrl+C</i>
<i class="s" style="right:7px;top:329px">Ctrl+V</i>
<i class="s" style="right:7px;top:366px">Alt+F7</i>
<i class="s" style="right:7px;top:392px">Ctrl+Shift+F</i>
<i class="s" style="right:7px;top:418px">Ctrl+Shift+R</i>
<i class="s" style="right:7px;top:557px">Ctrl+Alt+L</i>
<i class="s" style="right:7px;top:584px">Ctrl+Alt+O</i>
<i class="s" style="right:7px;top:610px">Delete</i>
<i class="s" style="right:7px;top:673px">Ctrl+Shift+F9</i>
<i class="s" style="right:7px;top:699px">Ctrl+Shift+F10</i>
<i class="s" style="right:7px;top:891px">Ctrl+D</i>
<i class="s" style="right:7px;top:1004px">Ctrl+Alt+Shift+K</i>
<div class="sp" style="left:13px;top:240px;width:426px"></div>
<div class="sp" style="left:13px;top:356px;width:426px"></div>
<div class="sp" style="left:13px;top:472px;width:426px"></div>
<div class="sp" style="left:13px;top:510px;width:426px"></div>
<div class="sp" style="left:13px;top:547px;width:426px"></div>
<div class="sp" style="left:13px;top:637px;width:426px"></div>
<div class="sp" style="left:13px;top:780px;width:426px"></div>
<div class="sp" style="left:13px;top:817px;width:426px"></div>
<div class="sp" style="left:13px;top:881px;width:426px"></div>
<div class="sp" style="left:13px;top:918px;width:426px;height:2px"></div>
<div class="sp" style="left:13px;top:956px;width:426px"></div>
<div class="sp" style="left:13px;top:993px;width:426px;height:2px"></div>
<svg style="left:425px;top:213px" width="16" height="16"><path d="M5 2.500l5.500 5.500L5 13.500" fill="none" stroke="#fff" stroke-width="1.400"/></svg>
<svg style="left:425px;top:445px" width="16" height="16"><use href="#cr"/></svg>
<svg style="left:425px;top:483px" width="16" height="16"><use href="#cr"/></svg>
<svg style="left:425px;top:520px" width="16" height="16"><use href="#cr"/></svg>
<svg style="left:425px;top:753px" width="16" height="16"><use href="#cr"/></svg>
<svg style="left:425px;top:790px" width="16" height="16"><use href="#cr"/></svg>
<svg style="left:425px;top:828px" width="16" height="16"><use href="#cr"/></svg>
<svg style="left:425px;top:929px" width="16" height="16"><use href="#cr"/></svg>
<svg style="left:425px;top:966px" width="16" height="16"><use href="#cr"/></svg>
<svg style="left:16px;top:251px" width="17" height="17"><circle cx="3.500" cy="3" r="2.500" fill="none" stroke="#5c5c5c" stroke-width="1.600"/><circle cx="3.500" cy="14" r="2.500" fill="none" stroke="#5c5c5c" stroke-width="1.600"/><path d="M5 4.500L16 14M5 12.500L16 2" stroke="#7a7a7a" stroke-width="1.600"/></svg>
<svg style="left:16px;top:277px" width="16" height="17"><path d="M1 12V1h10" fill="none" stroke="#6e6e6e" stroke-width="1.500"/><rect x="4" y="4" width="11" height="12" fill="#8a8a8a"/><path d="M6 7.500h7M6 10h7M6 12.500h7" stroke="#eee"/></svg>
<svg style="left:17px;top:328px" width="14" height="17"><rect x="1" y="3" width="12" height="13" fill="none" stroke="#6e6e6e" stroke-width="2"/><rect x="4" y="0" width="6" height="4" fill="#6e6e6e"/></svg>
<svg style="left:19px;top:701px" width="14" height="16"><path d="M0 0l13 8-13 8z" fill="#5aa96f"/></svg>
<svg style="left:16px;top:726px" width="17" height="18"><use href="#bug"/></svg>
<svg style="left:16px;top:854px" width="16" height="16"><path d="M2 6a6.500 6.500 0 0 1 12-1M14 10a6.500 6.500 0 0 1-12 1" fill="none" stroke="#6e6e6e" stroke-width="2"/><path d="M15 1v5h-5zM1 15v-5h5z" fill="#6e6e6e"/></svg>
<svg style="left:15px;top:892px" width="18" height="17"><path d="M0 12h5L7 9l1 7-3-1zM18 4h-5V1l-4 3 4 3z" fill="#3ea0dc"/><path d="M11 6l-3 8" stroke="#3ea0dc" stroke-width="1.400"/></svg>
<svg style="left:15px;top:966px" width="18" height="18"><use href="#dia"/></svg>
</div>
<div class="bd" style="left:509px;top:211px">2</div>

<!-- submenu -->
<div class="b" style="left:867px;top:201px;width:327px;height:693px;background:#f2f2f2;border:1px solid #d4d4d4;border-left:none;box-sizing:border-box"></div>
<div class="b" style="left:867px;top:313px;width:326px;height:26px;background:#2675bf"></div>
<div style="position:absolute;left:867px;top:0;width:326px;height:900px">
<i class="m" style="left:40px;top:212px;letter-spacing:-.7px">Java Class</i>
<i class="m" style="left:40px;top:238px">Kotlin Class/File</i>
<i class="m" style="left:40px;top:264px">File</i>
<i class="m" style="left:40px;top:290px;letter-spacing:-.2px">Scratch File</i>
<i class="m" style="left:40px;top:317px;color:#fff;letter-spacing:-.3px">Package</i>
<i class="m" style="left:40px;top:344px">Servlet</i>
<i class="m" style="left:40px;top:370px;letter-spacing:.25px">Web Filter</i>
<i class="m" style="left:40px;top:396px;letter-spacing:.2px">Web Listener</i>
<i class="m" style="left:40px;top:422px">package-info.java</i>
<i class="m" style="left:40px;top:449px">module-info.java</i>
<i class="m" style="left:40px;top:486px">HTML File</i>
<i class="m" style="left:40px;top:512px;letter-spacing:.4px">Kotlin Script</i>
<i class="m" style="left:40px;top:538px;letter-spacing:.3px">Kotlin Worksheet</i>
<i class="m" style="left:40px;top:565px">Stylesheet</i>
<i class="m" style="left:40px;top:591px;letter-spacing:.25px">JavaScript File</i>
<i class="m" style="left:40px;top:617px;letter-spacing:.15px">TypeScript File</i>
<i class="m" style="left:40px;top:644px">package.json File</i>
<i class="m" style="left:40px;top:670px;letter-spacing:.12px">OpenAPI Specification</i>
<i class="m" style="left:40px;top:696px">Swing UI Designer</i>
<i class="m" style="left:40px;top:722px">Resource Bundle</i>
<i class="m" style="left:40px;top:748px;letter-spacing:.14px">EditorConfig File</i>
<i class="m" style="left:40px;top:774px;letter-spacing:.16px">XML Configuration File</i>
<i class="m" style="left:40px;top:801px;letter-spacing:-.2px">HTTP Request</i>
<i class="m" style="left:40px;top:827px">Diagram</i>
<i class="m" style="left:40px;top:865px">Data Source in Path</i>
<i class="s" style="right:12px;top:290px;font-size:17px">Ctrl+Alt+Shift+Insert</i>
<div class="sp" style="left:13px;top:476px;width:301px"></div>
<div class="sp" style="left:13px;top:855px;width:301px"></div>
<svg style="left:300px;top:696px" width="16" height="16"><use href="#cr"/></svg>
<svg style="left:300px;top:775px" width="16" height="16"><use href="#cr"/></svg>
<svg style="left:300px;top:828px" width="16" height="16"><use href="#cr"/></svg>
<svg style="left:15px;top:213px" width="18" height="18"><use href="#cls"/></svg>
<svg style="left:15px;top:238px" width="18" height="18"><use href="#kt"/></svg>
<svg style="left:15px;top:265px" width="18" height="18"><use href="#doc"/><use href="#lines"/></svg>
<svg style="left:15px;top:291px" width="18" height="18"><use href="#doc"/><use href="#lines"/><circle cx="14" cy="3.500" r="3.500" fill="#3fb1e3"/></svg>
<svg style="left:15px;top:318px" width="18" height="16"><path d="M0 1h7l2 2h9v12H0z" fill="#afb9c1"/><circle cx="6" cy="9.500" r="2" fill="#2675bf"/></svg>
<svg style="left:15px;top:344px" width="18" height="15"><path d="M2 0h14v4H2zM2 5.500h14v4H2zM2 11h14v4H2z" fill="#c3cacf"/></svg>
<svg style="left:15px;top:371px" width="18" height="16"><path d="M0 0h16L10 7v9H6V7z" fill="#6e6e6e" transform="translate(1)"/></svg>
<svg style="left:15px;top:396px" width="18" height="18"><circle cx="9" cy="10" r="5.500" fill="#b3bcc3"/><path d="M1 13V9a8 8 0 0 1 16 0v4" fill="none" stroke="#b3bcc3" stroke-width="1.700"/><path d="M6 8l3 3 2-3" fill="none" stroke="#f2f2f2"/></svg>
<svg style="left:15px;top:422px" width="19" height="19"><path d="M8 0v5H4zM9 0h5v9H4V6h5z" fill="#b3bcc3"/><rect y="10" width="19" height="8" fill="#76c8e9"/><text x="3" y="17.500" font-size="8.500" font-weight="bold" fill="#2c4a58">J</text></svg>
<svg style="left:15px;top:448px" width="19" height="19"><path d="M8 0v5H4zM9 0h5v9H4V6h5z" fill="#b3bcc3"/><rect y="10" width="19" height="8" fill="#76c8e9"/><text x="3" y="17.500" font-size="8.500" font-weight="bold" fill="#2c4a58">J</text></svg>
<svg style="left:15px;top:486px" width="19" height="19"><path d="M8 0v5H4zM9 0h5v9H4V6h5z" fill="#b3bcc3"/><rect y="10" width="19" height="8" fill="#8fc46e"/><text x="2" y="17.500" font-size="8.500" font-weight="bold" fill="#2c4a28">H</text></svg>
<svg style="left:15px;top:512px" width="18" height="18"><use href="#ks"/></svg>
<svg style="left:15px;top:539px" width="18" height="18"><use href="#ks"/></svg>
<svg style="left:15px;top:565px" width="19" height="19"><path d="M8 0v5H4zM9 0h5v9H4V6h5z" fill="#b3bcc3"/><rect y="10" width="19" height="8" fill="#f5a9b2"/><text x="1" y="17.500" font-size="7.500" font-weight="bold" fill="#5a2a30">CSS</text></svg>
<svg style="left:15px;top:591px" width="19" height="19"><path d="M8 0v5H4zM9 0h5v9H4V6h5z" fill="#b3bcc3"/><rect y="10" width="19" height="8" fill="#f4c078"/><text x="1" y="17.500" font-size="8" font-weight="bold" fill="#5a4020">JS</text></svg>
<svg style="left:15px;top:618px" width="19" height="19"><path d="M8 0v5H4zM9 0h5v9H4V6h5z" fill="#b3bcc3"/><rect y="10" width="19" height="8" fill="#6cc0e6"/><text x="2" y="17.500" font-size="8" font-weight="bold" fill="#23485a">TS</text></svg>
<svg style="left:15px;top:643px" width="18" height="19"><path d="M9 1l7 4v9l-7 4-7-4V5z" fill="none" stroke="#8dc58a" stroke-width="1.500"/><text x="4" y="13" font-size="7.500" fill="#8dc58a">JS</text></svg>
<svg style="left:15px;top:670px" width="18" height="18"><circle cx="8.500" cy="10" r="8" fill="#6dbb6d"/><path d="M3 10l5 1 8-8" stroke="#444" stroke-width="1.500" fill="none"/><circle cx="15.500" cy="3" r="2" fill="#555"/><circle cx="8" cy="11" r="2" fill="#333"/><circle cx="2" cy="9" r="2" fill="#333"/></svg>
<svg style="left:15px;top:722px" width="19" height="19"><path d="M8 0v5H4zM9 0h5v17H4V6h5z" fill="#b3bcc3"/><path d="M9 12h3v6H9z" fill="#f28a3c"/><path d="M13 9h2v9h-2z" fill="#e8b33c"/><path d="M16 10h2.500v8H16z" fill="#6fbb4f"/></svg>
<svg style="left:15px;top:749px" width="17" height="17"><circle cx="8.500" cy="8.500" r="5" fill="none" stroke="#b3bcc3" stroke-width="3.500"/><path d="M8.500 0v3M8.500 14v3M0 8.500h3M14 8.500h3M2.500 2.500l2 2M12.500 12.500l2 2M2.500 14.500l2-2M12.500 4.500l2-2" stroke="#b3bcc3" stroke-width="2.400"/></svg>
<svg style="left:15px;top:775px" width="19" height="19"><path d="M8 0v5H4zM9 0h5v9H4V6h5z" fill="#b3bcc3"/><rect y="10" width="19" height="8" fill="#f28a5c"/><path d="M6 12l-3 2 3 2M13 12l3 2-3 2" fill="none" stroke="#5a2a18" stroke-width="1.200"/></svg>
<svg style="left:15px;top:801px" width="19" height="19"><path d="M8 0v5H4zM9 0h5v9H4V6h5z" fill="#b3bcc3"/><rect y="9" width="19" height="9" fill="#6cc0e6"/><text x="1" y="17" font-size="7.500" font-weight="bold" fill="#23485a">API</text></svg>
<svg style="left:15px;top:827px" width="18" height="18"><use href="#dia"/></svg>
<svg style="left:15px;top:865px" width="18" height="18"><ellipse cx="9" cy="3" rx="9" ry="3" fill="#80cfee"/><path d="M0 5c2 2.500 16 2.500 18 0v4c-2 2.500-16 2.500-18 0zM0 11c2 2.500 16 2.500 18 0v4c-2 3-16 3-18 0z" fill="#80cfee"/></svg>
</div>
<div class="bd" style="left:976px;top:316px">3</div>

<!-- tooltip -->
<div class="b" style="left:364px;top:224px;width:80px;height:43px;background:rgba(0,0,0,.58);border-radius:4px"></div>
<div class="b" style="left:359px;top:240px;width:0;height:0;border:5px solid transparent;border-right-color:rgba(0,0,0,.58);border-left:none"></div>
<i class="b" style="left:371px;top:234px;font:normal 20px/24px 'Noto Sans CJK SC',sans-serif;color:#fff;white-space:nowrap">右键</i>
</body></html>
